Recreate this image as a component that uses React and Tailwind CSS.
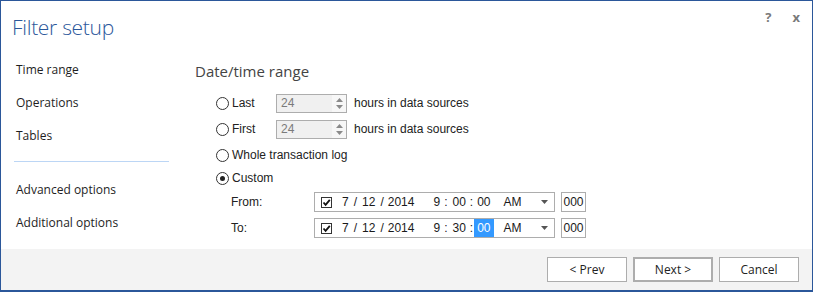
import React from "react";

const ui = { fontFamily: '"Open Sans", "Noto Sans", sans-serif' };
const form = { fontFamily: '"Liberation Sans", Arial, sans-serif' };

const Radio = ({ checked, label, wide }) => (
    <div className="flex items-center h-[20px]">
        <span className="w-[13px] h-[13px] rounded-full border border-[#333] bg-white flex items-center justify-center ml-[21px]">
            {checked && <span className="w-[5px] h-[5px] rounded-full bg-[#222]" />}
        </span>
        <span className={`ml-[3px] text-[12px] text-[#222] ${wide ? "" : "w-[44px]"}`} style={form}>{label}</span>
    </div>
);

const Spin = () => (
    <div className="w-[71px] h-[19px] border border-[#adadad] bg-[#f0f0f0] flex items-center">
        <span className="flex-1 pl-[4px] text-[12px] text-[#7a7a7a]" style={form}>24</span>
        <span className="w-[14px] h-full flex flex-col items-center justify-center gap-[3px] bg-[#f7f7f7]">
            <svg width="7" height="4" viewBox="0 0 7 4"><path d="M3.5 0 L7 4 H0 Z" fill="#8a8a8a" /></svg>
            <svg width="7" height="4" viewBox="0 0 7 4"><path d="M0 0 H7 L3.5 4 Z" fill="#8a8a8a" /></svg>
        </span>
    </div>
);

const DateBox = ({ sec, hi }) => (
    <div className="flex items-center">
        <div className="w-[241px] h-[20px] border border-[#adadad] bg-white flex items-center text-[12px] text-[#1a1a1a]" style={form}>
            <span className="ml-[6px] w-[11px] h-[11px] border border-[#333] flex items-center justify-center">
                <svg width="9" height="9" viewBox="0 0 9 9"><path d="M1.5 4.5 L3.6 6.8 L7.8 1.8" stroke="#111" strokeWidth="1.8" fill="none" /></svg>
            </span>
            <span className="ml-[10px]">7</span>
            <span className="ml-[5px]">/</span>
            <span className="ml-[5px]">12</span>
            <span className="ml-[5px]">/</span>
            <span className="ml-[4px]">2014</span>
            <span className="ml-[19px]">9</span>
            <span className="ml-[4px]">:</span>
            <span className="ml-[5px]">{sec}</span>
            <span className="ml-[4px]">:</span>
            <span className={`ml-[1px] px-[3px] ${hi ? "bg-[#3399ff] text-white" : ""}`}>00</span>
            <span className="ml-[10px]">AM</span>
            <span className="ml-auto mr-[6px]">
                <svg width="7" height="4" viewBox="0 0 7 4"><path d="M0 0 H7 L3.5 4 Z" fill="#555" /></svg>
            </span>
        </div>
        <div className="ml-[6px] w-[25px] h-[20px] border border-[#adadad] bg-white flex items-center justify-center text-[12px] text-[#1a1a1a]" style={form}>000</div>
    </div>
);

const Btn = ({ children, primary }) => (
    <button className={`w-[80px] h-[25px] bg-white text-[12px] text-[#222] ${primary ? "border-2 border-[#adadad]" : "border border-[#adadad]"}`} style={ui}>
        {children}
    </button>
);

export default function App() {
    return (
        <div className="w-[813px] h-[292px] border border-b-2 border-[#2b579a] bg-white flex flex-col" style={ui}>
            <div className="relative h-[52px]">
                <div className="pl-[11px] pt-[11px] text-[21px] leading-[30px] font-light tracking-[-0.3px] text-[#2b579a]">Filter setup</div>
                <div className="absolute right-[12px] top-[7px] flex items-center gap-[21px] text-[13px] font-bold text-[#7a7a7a]">
                    <span>?</span>
                    <span>x</span>
                </div>
            </div>

            <div className="flex flex-1">
                {/* nav */}
                <div className="w-[180px] pl-[13px] text-[12px] text-[#1e1e1e]">
                    <div className="h-[33px] flex items-center pl-[2px]">Time range</div>
                    <div className="h-[33px] flex items-center pl-[2px]">Operations</div>
                    <div className="h-[33px] flex items-center pl-[2px]">Tables</div>
                    <div className="mt-[9px] w-[155px] h-px bg-[#bcd6f5]" />
                    <div className="mt-[11px] h-[33px] flex items-center pl-[2px]">Advanced options</div>
                    <div className="h-[33px] flex items-center pl-[2px]">Additional options</div>
                </div>

                {/* content */}
                <div className="pl-[14px] pt-[8px]">
                    <div className="text-[15px] leading-[20px] text-[#444]">Date/time range</div>
                    <div className="mt-[12px] flex items-center">
                        <Radio label="Last" />
                        <Spin />
                        <span className="ml-[7px] text-[12px] text-[#222]" style={form}>hours in data sources</span>
                    </div>
                    <div className="mt-[6px] flex items-center">
                        <Radio label="First" />
                        <Spin />
                        <span className="ml-[7px] text-[12px] text-[#222]" style={form}>hours in data sources</span>
                    </div>
                    <div className="mt-[6px]"><Radio label="Whole transaction log" wide /></div>
                    <div className="mt-[3px]"><Radio label="Custom" checked wide /></div>
                    <div className="mt-[4px] flex items-center">
                        <span className="w-[119px] pl-[36px] text-[12px] text-[#222]" style={form}>From:</span>
                        <DateBox sec="00" />
                    </div>
                    <div className="mt-[6px] flex items-center">
                        <span className="w-[119px] pl-[36px] text-[12px] text-[#222]" style={form}>To:</span>
                        <DateBox sec="30" hi />
                    </div>
                </div>
            </div>

            <div className="h-[41px] bg-[#f3f3f3] flex items-start justify-end gap-[6px] pt-[8px] pr-[13px]">
                <Btn>&lt; Prev</Btn>
                <Btn primary>Next &gt;</Btn>
                <Btn>Cancel</Btn>
            </div>
        </div>
    );
}
